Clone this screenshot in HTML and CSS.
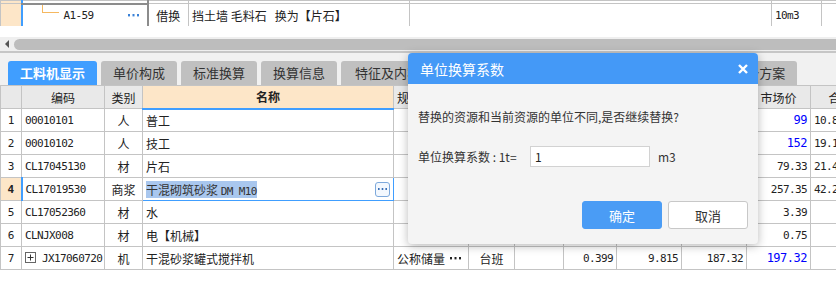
FILE: index.html
```html
<!DOCTYPE html>
<html lang="zh-CN">
<head>
  <meta charset="UTF-8">
  <title>工料机显示</title>
  <link rel="stylesheet" href="styles.css">
</head>
<body>

  <!-- 上方定额行 -->
  <div class="top-grid">
    <table class="grid">
      <colgroup>
        <col class="t-num"><col class="t-code"><col class="t-type"><col class="t-name"><col class="t-spec"><col class="t-unit"><col class="t-rest">
      </colgroup>
      <tr class="stub">
        <td class="rownum-sel"></td><td class="code-sel"></td><td></td><td></td><td></td><td></td><td></td>
      </tr>
      <tr>
        <td class="rownum-sel"></td>
        <td class="code-sel">
          <div class="cell-edit tree-cell">
            <span class="tree-line"></span>
            <span class="mono">A1-59</span>
            <svg class="dots" width="11" height="3" viewBox="0 0 11 3"><rect x="0" y="0" width="2" height="2.4" fill="#3a82d8"/><rect x="4.5" y="0" width="2" height="2.4" fill="#3a82d8"/><rect x="9" y="0" width="2" height="2.4" fill="#3a82d8"/></svg>
          </div>
        </td>
        <td class="center">借换</td>
        <td>挡土墙&nbsp;毛料石&nbsp;&nbsp;&nbsp;换为【片石】</td>
        <td></td>
        <td class="mono">10m3</td>
        <td></td>
      </tr>
    </table>
  </div>

  <!-- 横向滚动条 -->
  <div class="hscroll">
    <div class="scroll-track">
      <span class="scroll-arrow"></span>
      <div class="scroll-thumb"></div>
    </div>
  </div>

  <!-- 页签 -->
  <div class="tabs">
    <div class="tab tab-active">工料机显示</div>
    <div class="tab">单价构成</div>
    <div class="tab">标准换算</div>
    <div class="tab">换算信息</div>
    <div class="tab tab-wide">特征及内容</div>
    <div class="tab">工程量明细</div>
    <div class="tab">反查图形量</div>
    <div class="tab tab-wide">说明及信息</div>
    <div class="tab">组价方案</div>
  </div>

  <!-- 工料机表格 -->
  <table class="grid main-grid">
    <colgroup>
      <col class="m-num"><col class="m-code"><col class="m-type"><col class="m-name"><col class="m-spec"><col class="m-unit"><col class="m-loss"><col class="m-qty"><col class="m-amount"><col class="m-quota"><col class="m-market"><col class="m-total">
    </colgroup>
    <tr class="head">
      <th></th>
      <th>编码</th>
      <th>类别</th>
      <th class="th-name">名称</th>
      <th class="th-left">规格型号</th>
      <th>单位</th>
      <th>损耗率</th>
      <th>含量</th>
      <th>数量</th>
      <th>定额价</th>
      <th>市场价</th>
      <th>合价</th>
    </tr>
    <tr>
      <td class="rownum">1</td><td class="mono">00010101</td><td class="center">人</td><td>普工</td>
      <td></td><td class="center">工日</td><td></td><td class="num">0.27</td><td class="num">0.11</td><td class="num">99</td><td class="num num-blue">99</td><td class="num total">10.89</td>
    </tr>
    <tr>
      <td class="rownum">2</td><td class="mono">00010102</td><td class="center">人</td><td>技工</td>
      <td></td><td class="center">工日</td><td></td><td class="num">0.45</td><td class="num">0.126</td><td class="num">152</td><td class="num num-blue">152</td><td class="num total">19.15</td>
    </tr>
    <tr>
      <td class="rownum">3</td><td class="mono">CL17045130</td><td class="center">材</td><td>片石</td>
      <td></td><td class="center">m3</td><td></td><td class="num">1.17</td><td class="num">0.27</td><td class="num">79.33</td><td class="num">79.33</td><td class="num total">21.42</td>
    </tr>
    <tr>
      <td class="rownum rownum-sel">4</td><td class="mono code-active">CL17019530</td><td class="center">商浆</td>
      <td class="name-active">
        <div class="cell-edit">
          <span class="hl">干混砌筑砂浆 <span class="mono">DM M10</span></span>
          <span class="cell-btn"><svg width="9" height="2" viewBox="0 0 9 2"><rect x="0" y="0" width="1.6" height="2" fill="#3a6fb5"/><rect x="3.7" y="0" width="1.6" height="2" fill="#3a6fb5"/><rect x="7.4" y="0" width="1.6" height="2" fill="#3a6fb5"/></svg></span>
        </div>
      </td>
      <td></td><td class="center">t</td><td></td><td class="num">0.36</td><td class="num">0.164</td><td class="num">257.35</td><td class="num">257.35</td><td class="num total">42.21</td>
    </tr>
    <tr>
      <td class="rownum">5</td><td class="mono">CL17052360</td><td class="center">材</td><td>水</td>
      <td></td><td class="center">m3</td><td></td><td class="num">0.079</td><td class="num">0.03</td><td class="num">3.39</td><td class="num">3.39</td><td></td>
    </tr>
    <tr>
      <td class="rownum">6</td><td class="mono">CLNJX008</td><td class="center">材</td><td>电【机械】</td>
      <td></td><td class="center">kW·h</td><td></td><td class="num">0.4</td><td class="num">0.15</td><td class="num">0.75</td><td class="num">0.75</td><td></td>
    </tr>
    <tr>
      <td class="rownum">7</td>
      <td class="mono code-tree"><span class="expand"><svg width="11" height="11" viewBox="0 0 11 11"><rect x="0.5" y="0.5" width="10" height="10" fill="#fff" stroke="#666"/><path d="M2.5 5.5h6M5.5 2.5v6" stroke="#333"/></svg></span>JX17060720</td>
      <td class="center">机</td><td>干混砂浆罐式搅拌机</td>
      <td>
        <div class="cell-edit">
          <span>公称储量</span>
          <svg class="dots dots-dark" width="11" height="3" viewBox="0 0 11 3"><rect x="0" y="0" width="2" height="2.4" fill="#222"/><rect x="4.5" y="0" width="2" height="2.4" fill="#222"/><rect x="9" y="0" width="2" height="2.4" fill="#222"/></svg>
        </div>
      </td>
      <td class="center">台班</td><td></td><td class="num">0.399</td><td class="num">9.815</td><td class="num">187.32</td><td class="num num-blue">197.32</td><td></td>
    </tr>
  </table>

  <!-- 单位换算系数对话框 -->
  <div class="dialog">
    <div class="dialog-title">
      <span>单位换算系数</span>
      <svg class="dialog-close" width="10" height="10" viewBox="0 0 10 10"><path d="M1 1l8 8M9 1l-8 8" stroke="#fff" stroke-width="2.4"/></svg>
    </div>
    <div class="dialog-body">
      <p class="dialog-msg">替换的资源和当前资源的单位不同,是否继续替换?</p>
      <div class="dialog-field">
        <label for="coef">单位换算系数 : 1t=</label>
        <input id="coef" class="dialog-input" type="text" value="1">
        <span class="dialog-unit">m3</span>
      </div>
    </div>
    <div class="dialog-actions">
      <button class="btn btn-primary">确定</button>
      <button class="btn">取消</button>
    </div>
  </div>

</body>
</html>
```

FILE: styles.css
```css
* {
  margin: 0;
  padding: 0;
  box-sizing: border-box;
}

body {
  position: relative;
  width: 836px;
  height: 287px;
  overflow: hidden;
  background: #fff;
  font-family: "Noto Sans CJK SC", sans-serif;
  font-size: 12px;
  color: #222;
}

/* 表格通用 */
.grid {
  border-collapse: collapse;
  table-layout: fixed;
}

.grid td,
.grid th {
  border: 1px solid #c4c4c4;
  height: 23px;
  padding: 0 3px;
  white-space: nowrap;
  overflow: hidden;
  font-weight: normal;
  text-align: left;
}

.center {
  text-align: center !important;
}

.mono {
  font-family: "DejaVu Sans Mono", monospace;
  font-size: 11px;
  letter-spacing: -0.6px;
}

.num {
  font-family: "DejaVu Sans Mono", monospace;
  font-size: 11px;
  letter-spacing: -0.6px;
  text-align: right !important;
}

.num-blue {
  color: #0000ff;
  font-weight: bold;
  font-size: 12px;
  letter-spacing: -0.5px;
}

.num.total {
  text-align: left !important;
}

/* 上方定额行 */
.top-grid {
  height: 26px;
  overflow: hidden;
}

.top-grid .grid {
  width: 900px;
}

.t-num { width: 21px; }
.t-code { width: 126px; }
.t-type { width: 41px; }
.t-name { width: 221px; }
.t-spec { width: 362px; }
.t-unit { width: 50px; }
.t-rest { width: 79px; }

.top-grid .stub td {
  height: 3px;
  padding: 0;
}

.rownum-sel {
  background: #fde6c8;
}

.code-sel {
  border: 2px solid #8c8c8c !important;
  border-left-color: #409eff !important;
  border-top: 1px solid #c4c4c4 !important;
}

.top-grid .stub .code-sel {
  border-bottom: 2px solid #8c8c8c !important;
}

.cell-edit {
  display: flex;
  align-items: center;
  justify-content: space-between;
}

.tree-cell {
  position: relative;
  padding-left: 38px;
  padding-right: 5px;
}

.tree-line {
  position: absolute;
  left: 16px;
  top: -16px;
  width: 17px;
  height: 20px;
  border-left: 1px solid #f5b860;
  border-bottom: 1px solid #f5b860;
}

.dots {
  display: block;
}

.dots-dark {
  margin-right: 4px;
}

/* 滚动条 */
.hscroll {
  padding-top: 11px;
  border-bottom: 2px solid #c6c6c6;
}

.scroll-track {
  display: flex;
  align-items: center;
  height: 14px;
  padding-left: 5px;
  background: #efefef;
}

.scroll-arrow {
  width: 0;
  height: 0;
  border-top: 4px solid transparent;
  border-bottom: 4px solid transparent;
  border-right: 4px solid #555;
  margin-right: 5px;
}

.scroll-thumb {
  flex: 1;
  height: 11px;
  background: #bdbdbd;
  border-radius: 6px 0 0 6px;
}

/* 页签 */
.tabs {
  display: flex;
  align-items: flex-end;
  gap: 4px;
  height: 32px;
  padding-left: 8px;
  background: #f1f1f1;
  white-space: nowrap;
  overflow: hidden;
}

.tab {
  flex: none;
  height: 24px;
  line-height: 24px;
  padding: 0 12px;
  font-size: 13px;
  color: #333;
  background: #c0c0c0;
  border-radius: 3px 3px 0 0;
}

.tab-wide {
  padding: 0 14px;
}

.tab-active {
  background: #409eff;
  color: #fff;
  font-weight: bold;
}

/* 工料机表格 */
.main-grid {
  width: 870px;
}

.m-num { width: 21px; }
.m-code { width: 83px; }
.m-type { width: 38px; }
.m-name { width: 251px; }
.m-spec { width: 75px; }
.m-unit { width: 46px; }
.m-loss { width: 49px; }
.m-qty { width: 53px; }
.m-amount { width: 65px; }
.m-quota { width: 65px; }
.m-market { width: 64px; }
.m-total { width: 60px; }

.main-grid .head th {
  background: #e9e9e9;
  text-align: center;
  height: 23px;
}

.main-grid .head .th-name {
  background: #fde6c8;
  font-weight: bold;
  border-bottom: 2px solid #409eff;
}

.main-grid .head .th-left {
  text-align: left;
}

.rownum {
  text-align: center !important;
  font-family: "DejaVu Sans Mono", monospace;
  font-size: 11px;
}

.rownum.rownum-sel {
  font-weight: bold;
}

.code-active {
  border-left: 2px solid #409eff !important;
}

.code-tree {
  padding-right: 0 !important;
}

.name-active {
  border: 1px solid #409eff !important;
}

.hl {
  background: #a9c7ee;
  color: #333;
}

.cell-btn {
  display: flex;
  align-items: center;
  justify-content: center;
  width: 15px;
  height: 15px;
  border: 1px solid #7da9dc;
  border-radius: 3px;
  background: #f3f8fe;
}

.cell-btn svg {
  display: block;
}

.expand {
  display: inline-block;
  vertical-align: -1px;
  margin-right: 6px;
}

.expand svg {
  display: block;
}

/* 对话框 */
.dialog {
  position: absolute;
  left: 408px;
  top: 53px;
  width: 350px;
  height: 191px;
  display: flex;
  flex-direction: column;
  background: #f4f4f4;
  border-radius: 4px;
  overflow: hidden;
  box-shadow: 0 2px 10px rgba(0, 0, 0, 0.28);
}

.dialog-title {
  display: flex;
  align-items: center;
  justify-content: space-between;
  height: 31px;
  padding: 0 10px 0 12px;
  background: #4499f7;
  color: #fff;
  font-size: 14px;
}

.dialog-body {
  flex: 1;
  padding: 24px 10px 0;
  color: #333;
}

.dialog-msg {
  line-height: 18px;
}

.dialog-field {
  display: flex;
  align-items: center;
  margin-top: 20px;
}

.dialog-field label {
  width: 104px;
  white-space: nowrap;
}

.dialog-input {
  width: 120px;
  height: 21px;
  margin-left: 8px;
  padding: 0 4px;
  border: 1px solid #d2d2d2;
  background: #fff;
  font-family: "Noto Sans CJK SC", sans-serif;
  font-size: 12px;
  color: #222;
}

.dialog-unit {
  margin-left: 8px;
}

.dialog-actions {
  display: flex;
  justify-content: flex-end;
  gap: 6px;
  padding: 0 10px 15px;
}

.btn {
  width: 80px;
  height: 28px;
  border: 1px solid #c8c8c8;
  border-radius: 3px;
  background: #fff;
  font-family: "Noto Sans CJK SC", sans-serif;
  font-size: 13px;
  color: #333;
}

.btn-primary {
  background: #4a9cf5;
  border-color: #4a9cf5;
  color: #fff;
}
```
